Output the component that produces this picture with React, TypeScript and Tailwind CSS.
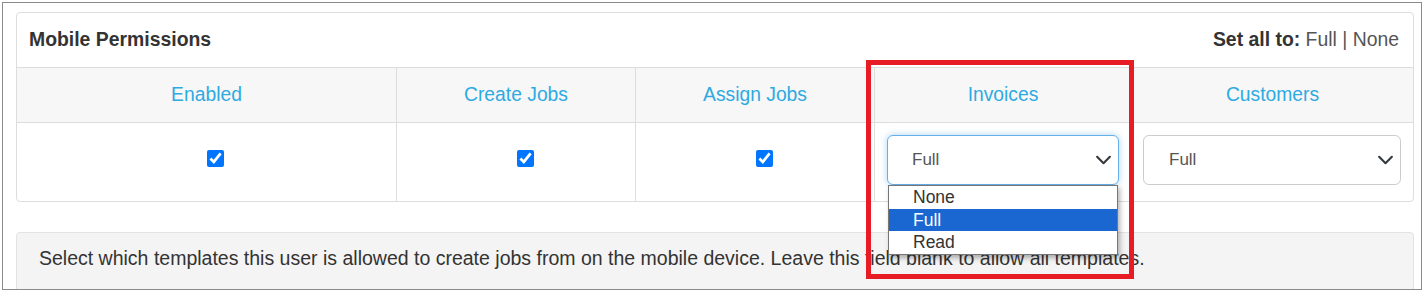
import React from "react";

function Chevron() {
  return (
    <svg
      viewBox="0 0 16 16"
      className="absolute right-[6px] top-1/2 -translate-y-1/2 w-[17px] h-[17px] pointer-events-none"
      fill="none"
      stroke="#343a40"
      strokeWidth="2"
      strokeLinecap="round"
      strokeLinejoin="round"
    >
      <path d="m2 5 6 6 6-6" />
    </svg>
  );
}

function CheckCell({ width, last }: { width: string; last?: boolean }) {
  return (
    <div className={`${width} ${last ? "" : "border-r border-[#dddddd]"} flex justify-center pt-[27px]`}>
      <input
        type="checkbox"
        defaultChecked
        className="ml-[18px] w-[17px] h-[17px] m-0 accent-[#0075ff]"
      />
    </div>
  );
}

export default function App() {
  const headers = [
    { label: "Enabled", w: "w-[380px]" },
    { label: "Create Jobs", w: "w-[239px]" },
    { label: "Assign Jobs", w: "w-[239px]" },
    { label: "Invoices", w: "w-[257px]" },
    { label: "Customers", w: "w-[281px]" },
  ];
  return (
    <div className="w-[1423px] h-[290px] bg-white pt-[2px] pl-[2px] font-['Liberation_Sans',Arial,sans-serif]">
      <div className="relative w-[1420px] h-[288px] border border-[#8a8a8a] overflow-hidden pt-[9px] pl-[13px]">
        {/* Panel */}
        <div className="w-[1398px] border border-[#dddddd] rounded-[4px]">
          <div className="h-[55px] border-b border-[#dddddd] flex items-center justify-between pl-[12px] pr-[14px] text-[19.4px] text-[#333333]">
            <span className="font-bold">Mobile Permissions</span>
            <span>
              <span className="font-bold">Set all to: </span>
              <span className="text-[#555555]">Full | None</span>
            </span>
          </div>
          <div className="flex h-[55px] bg-[#f7f7f7] border-b border-[#dddddd]">
            {headers.map((h, i) => (
              <div
                key={h.label}
                className={`${h.w} ${i < 4 ? "border-r border-[#dddddd]" : ""} flex items-center justify-center text-[19.3px] text-[#2eaae2]`}
              >
                {h.label}
              </div>
            ))}
          </div>
          <div className="flex h-[78px]">
            <CheckCell width="w-[380px]" />
            <CheckCell width="w-[239px]" />
            <CheckCell width="w-[239px]" />
            <div className="w-[257px] border-r border-[#dddddd] px-[12px] pt-[12px]">
              <div className="relative h-[50px] border border-[#66afe9] rounded-[6px] shadow-[0_0_7px_rgba(102,175,233,0.55)] bg-white flex items-center pl-[24px] text-[17px] text-[#555555]">
                Full
                <Chevron />
                <div className="absolute left-[0px] top-[49px] w-[230px] bg-white border border-[#767676] shadow-[2px_3px_5px_rgba(0,0,0,0.3)] text-[17.5px] text-[#333333] z-10">
                  <div className="h-[23px] flex items-center pl-[24px]">None</div>
                  <div className="h-[22px] flex items-center pl-[24px] bg-[#1a67d2] text-white">Full</div>
                  <div className="h-[23px] flex items-center pl-[24px]">Read</div>
                </div>
              </div>
            </div>
            <div className="w-[281px] pl-[11px] pr-[12px] pt-[12px]">
              <div className="relative h-[50px] border border-[#cccccc] rounded-[6px] bg-white flex items-center pl-[25px] text-[17px] text-[#555555]">
                Full
                <Chevron />
              </div>
            </div>
          </div>
        </div>

        {/* Info box */}
        <div className="mt-[30px] w-[1398px] h-[90px] bg-[#f4f4f4] border border-[#e3e3e3] rounded-[4px] pl-[22px] pt-[13px] text-[19.5px] leading-[24px] text-[#333333]">
          Select which templates this user is allowed to create jobs from on the mobile device. Leave this field blank to allow all templates.
        </div>

        {/* Red annotation box */}
        <div className="absolute left-[863px] top-[57px] w-[268px] h-[219px] border-[5px] border-[#e81c24] pointer-events-none z-20" />
      </div>
    </div>
  );
}
